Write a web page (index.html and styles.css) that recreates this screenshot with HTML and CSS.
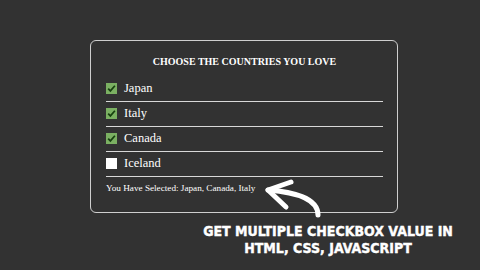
FILE: index.html
```html
<!DOCTYPE html>
<html>
<head>
<meta charset="utf-8">
<link rel="stylesheet" href="styles.css">
</head>
<body>
<div class="stage">
  <section class="card">
    <h1 class="title">CHOOSE THE COUNTRIES YOU LOVE</h1>
    <ul class="list">
      <li class="row"><span class="box checked"><svg viewBox="0 0 11 11"><path d="M2.2 5.6 L4.4 7.9 L8.9 2.8" /></svg></span><span class="label">Japan</span></li>
      <li class="row"><span class="box checked"><svg viewBox="0 0 11 11"><path d="M2.2 5.6 L4.4 7.9 L8.9 2.8" /></svg></span><span class="label">Italy</span></li>
      <li class="row"><span class="box checked"><svg viewBox="0 0 11 11"><path d="M2.2 5.6 L4.4 7.9 L8.9 2.8" /></svg></span><span class="label">Canada</span></li>
      <li class="row"><span class="box"></span><span class="label">Iceland</span></li>
    </ul>
    <p class="result">You Have Selected: Japan, Canada, Italy</p>
  </section>
  <h2 class="headline">GET MULTIPLE CHECKBOX VALUE IN<br>HTML, CSS, JAVASCRIPT</h2>
  <svg class="arrow" width="480" height="270" viewBox="0 0 480 270">
    <path d="M268 190 C 292 192, 318 197, 318 215" />
    <path d="M291 182 L268 190 L286 207" />
  </svg>
</div>
</body>
</html>
```
FILE: styles.css
```css
* { box-sizing: border-box; margin: 0; padding: 0; }
html, body { width: 480px; height: 270px; overflow: hidden; }
body { background: #323232; color: #fff; font-family: "Liberation Serif", serif; }
.stage { position: relative; width: 480px; height: 270px; padding: 40px 0 0 90px; }
.card {
  width: 308px; height: 173px;
  border: 1px solid #cfcfcf; border-radius: 6px;
  padding: 15px 14px 0 15px;
}
.title {
  font-size: 10px; font-weight: bold; text-align: center; line-height: 12px;
  margin-top: 0; letter-spacing: 0;
}
.list { list-style: none; margin-top: 9px; }
.row {
  display: flex; align-items: center; gap: 7px;
  height: 25px; padding-top: 6px; padding-bottom: 8px;
  border-bottom: 1px solid #d8d8d8;
}
.box {
  width: 11px; height: 11px; background: #fff; flex: none; display: block;
}
.box.checked { background: #7bb062; }
.box svg { display: block; width: 11px; height: 11px; fill: none; stroke: #17400f; stroke-width: 1.7; }
.label { font-size: 12.5px; line-height: 11px; }
.result { font-size: 9.2px; margin-top: 6px; line-height: 11px; }
.headline {
  font-family: "DejaVu Sans Condensed", "DejaVu Sans", sans-serif; font-weight: bold;
  font-size: 14px; line-height: 17px; text-align: center;
  width: 260px; margin: 10px 0 0 108px; letter-spacing: 0;
  -webkit-text-stroke: 0.4px #fff;
}
.arrow { position: absolute; left: 0; top: 0; fill: none; stroke: #fff; stroke-width: 5; stroke-linecap: round; stroke-linejoin: round; }
```
